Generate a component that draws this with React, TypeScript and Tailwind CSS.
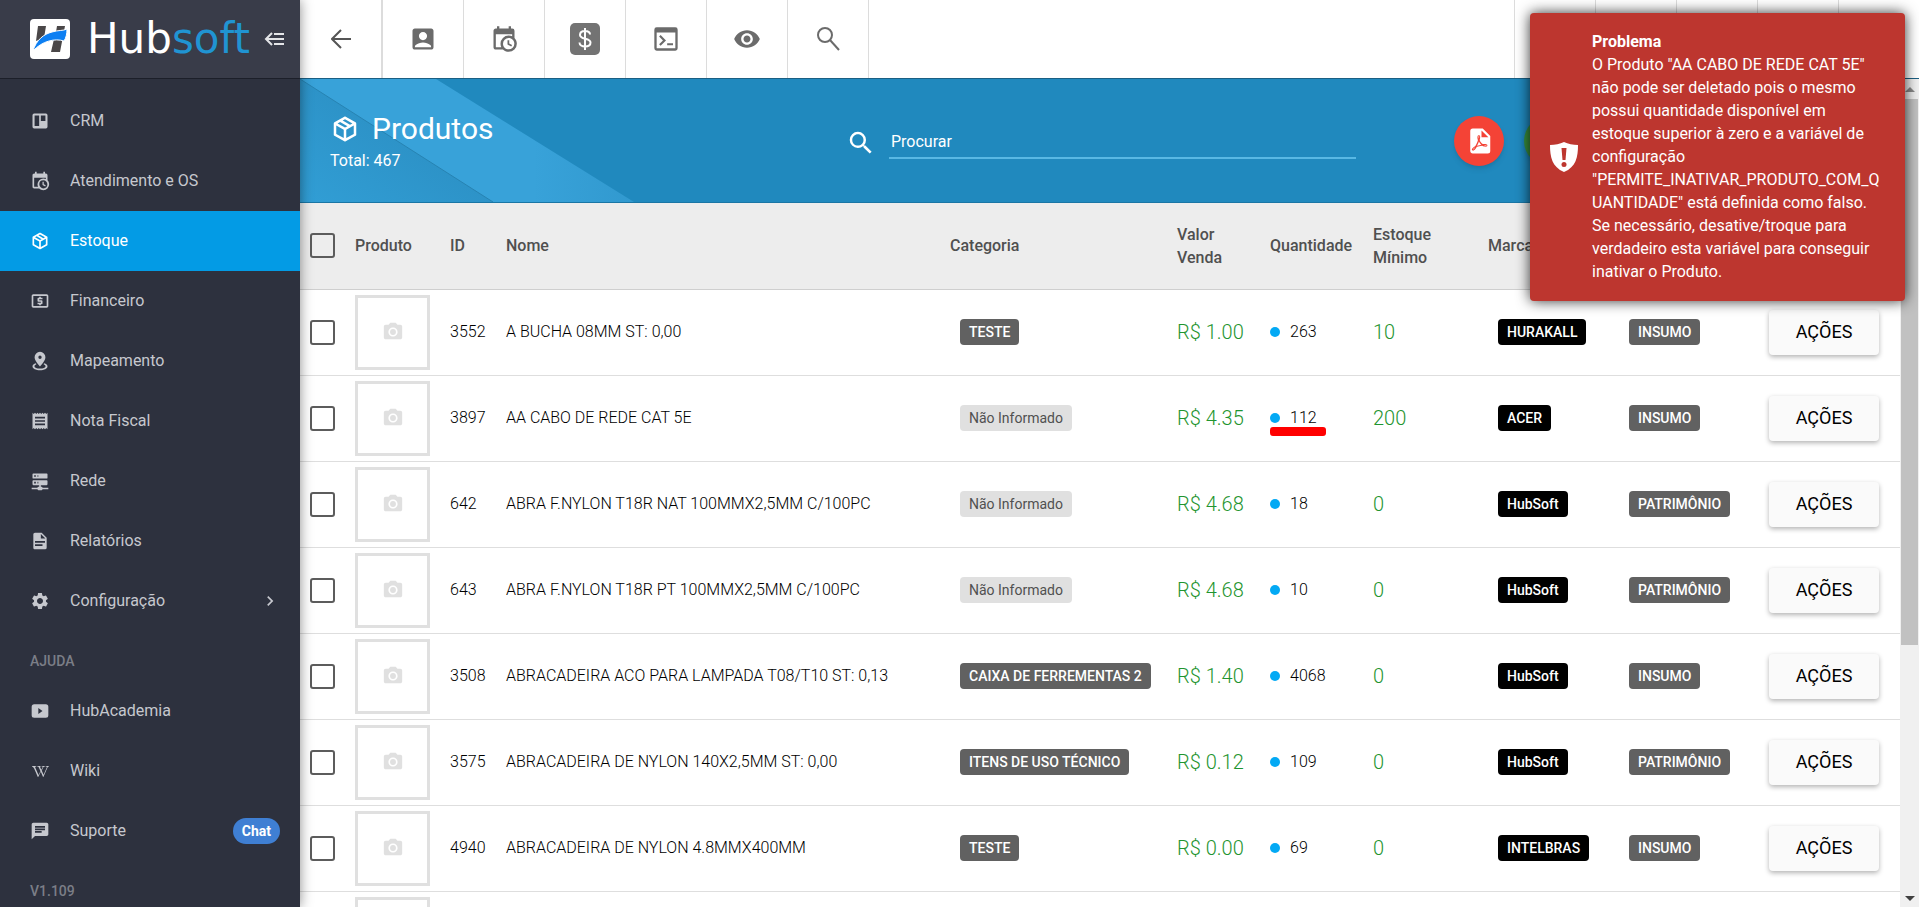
import React from 'react';
import { FaWikipediaW } from 'react-icons/fa';
import {
  MdAccountBox,
  MdCameraAlt,
  MdChat,
  MdChevronRight,
  MdLocalAtm,
  MdReceipt,
  MdRemoveRedEye,
  MdSearch,
  MdSettings,
} from 'react-icons/md';

const paths = {
  trello:
    'M5,3H19A2,2 0 0,1 21,5V19A2,2 0 0,1 19,21H5A2,2 0 0,1 3,19V5A2,2 0 0,1 5,3M5.5,5.5V18H11V5.5H5.5M13,5.5V12H18.5V5.5H13Z',
  calendarClock:
    'M15,13H16.5V15.82L18.94,17.23L18.19,18.53L15,16.69V13M19,8H5V19H9.67C9.24,18.09 9,17.07 9,16A7,7 0 0,1 16,9C17.07,9 18.09,9.24 19,9.67V8M5,21C3.89,21 3,20.1 3,19V5C3,3.89 3.89,3 5,3H6V1H8V3H16V1H18V3H19A2,2 0 0,1 21,5V11.1C22.24,12.36 23,14.09 23,16A7,7 0 0,1 16,23C14.09,23 12.36,22.24 11.1,21H5M16,11.15A4.85,4.85 0 0,0 11.15,16C11.15,18.68 13.32,20.85 16,20.85A4.85,4.85 0 0,0 20.85,16C20.85,13.32 18.68,11.15 16,11.15Z',
  box:
    'M21,16.5C21,16.88 20.79,17.21 20.47,17.38L12.57,21.82C12.41,21.94 12.21,22 12,22C11.79,22 11.59,21.94 11.43,21.82L3.53,17.38C3.21,17.21 3,16.88 3,16.5V7.5C3,7.12 3.21,6.79 3.53,6.62L11.43,2.18C11.59,2.06 11.79,2 12,2C12.21,2 12.41,2.06 12.57,2.18L20.47,6.62C20.79,6.79 21,7.12 21,7.5V16.5M12,4.15L10.11,5.22L16,8.61L17.96,7.5L12,4.15M6.04,7.5L12,10.85L13.96,9.75L8.08,6.35L6.04,7.5M5,15.91L11,19.29V12.58L5,9.21V15.91M19,15.91V9.21L13,12.58V19.29L19,15.91Z',
  marker:
    'M12,1A6.5,6.5 0 0,1 18.5,7.5C18.5,12 12,18.5 12,18.5C12,18.5 5.5,12 5.5,7.5A6.5,6.5 0 0,1 12,1M12,5.5A2,2 0 0,0 12,9.5A2,2 0 0,0 12,5.5M21,18.5C21,21 17,23 12,23C7,23 3,21 3,18.5C3,16.9 4.6,15.5 7,14.8L7.7,15.9C6.2,16.5 5.3,17.4 5.3,18.2C5.3,19.7 8.3,21 12,21C15.7,21 18.7,19.7 18.7,18.2C18.7,17.4 17.8,16.5 16.3,15.9L17,14.8C19.4,15.5 21,16.9 21,18.5Z',
  server:
    'M13,19H14A1,1 0 0,1 15,20H22V22H15A1,1 0 0,1 14,23H10A1,1 0 0,1 9,22H2V20H9A1,1 0 0,1 10,19H11V17H4A1,1 0 0,1 3,16V12A1,1 0 0,1 4,11H20A1,1 0 0,1 21,12V16A1,1 0 0,1 20,17H13V19M4,3H20A1,1 0 0,1 21,4V8A1,1 0 0,1 20,9H4A1,1 0 0,1 3,8V4A1,1 0 0,1 4,3M9,7H10V5H9V7M9,15H10V13H9V15M5,5V7H7V5H5M5,13V15H7V13H5Z',
  file:
    'M13,9H18.5L13,3.5V9M6,2H14L20,8V20A2,2 0 0,1 18,22H6C4.89,22 4,21.1 4,20V4C4,2.89 4.89,2 6,2M15,18V16H6V18H15M18,14V12H6V14H18Z',
  play:
    'M5,4H19A3,3 0 0,1 22,7V17A3,3 0 0,1 19,20H5A3,3 0 0,1 2,17V7A3,3 0 0,1 5,4M10,8.5V15.5L15,12L10,8.5Z',
  console:
    'M4,2H20A2,2 0 0,1 22,4V20A2,2 0 0,1 20,22H4A2,2 0 0,1 2,20V4A2,2 0 0,1 4,2M4,6.5V20H20V6.5H4M7.4,8.6L12,13.2L7.4,17.8L6.1,16.5L9.4,13.2L6.1,9.9L7.4,8.6M13,15.6H18V17.4H13V15.6Z',
  pdf:
    'M14,9H19.5L14,3.5V9M7,2H15L21,8V20A2,2 0 0,1 19,22H7C5.89,22 5,21.1 5,20V4A2,2 0 0,1 7,2M11.93,12.44C12.34,13.34 12.86,14.08 13.46,14.59L13.87,14.91C13,15.07 11.8,15.35 10.53,15.84V15.84L10.42,15.88L10.92,14.84C11.37,13.97 11.7,13.18 11.93,12.44M18.41,16.25C18.59,16.07 18.68,15.84 18.69,15.59C18.72,15.39 18.67,15.2 18.57,15.04C18.28,14.57 17.53,14.35 16.29,14.35L15,14.42L14.13,13.84C13.5,13.32 12.93,12.41 12.53,11.28L12.57,11.14C12.9,9.81 13.21,8.2 12.55,7.54C12.39,7.38 12.17,7.3 11.94,7.3H11.7C11.33,7.3 11,7.69 10.91,8.07C10.54,9.4 10.76,10.13 11.13,11.34V11.35C10.88,12.23 10.56,13.25 10.05,14.28L9.09,16.08L8.2,16.57C7,17.32 6.43,18.16 6.32,18.69C6.28,18.88 6.3,19.05 6.37,19.23L6.4,19.28L6.88,19.59L7.32,19.7C8.13,19.7 9.05,18.75 10.29,16.63L10.47,16.56C11.5,16.23 12.78,16 14.5,15.81C15.53,16.32 16.74,16.55 17.5,16.55C17.94,16.55 18.24,16.44 18.41,16.25M18,15.54L18.09,15.65C18.08,15.75 18.05,15.76 18,15.78H17.96L17.77,15.8C17.31,15.8 16.6,15.61 15.87,15.29C15.96,15.19 16,15.19 16.1,15.19C17.5,15.19 17.9,15.44 18,15.54M8.83,17C8.18,18.19 7.59,18.85 7.14,19C7.19,18.62 7.64,17.96 8.35,17.31L8.83,17M11.85,10.09C11.62,9.19 11.61,8.46 11.78,8.04L11.85,7.92L12,7.97C12.17,8.21 12.19,8.53 12.09,9.07L12.06,9.23L11.9,10.05L11.85,10.09Z',
};

function Icon({ name, size = 20 }: { name: keyof typeof paths; size?: number }) {
  return (
    <svg width={size} height={size} viewBox="0 0 24 24" fill="currentColor" fillRule="evenodd" aria-hidden="true">
      <path d={paths[name]} />
    </svg>
  );
}

const menu = [
  { label: 'CRM', icon: <Icon name="trello" /> },
  { label: 'Atendimento e OS', icon: <Icon name="calendarClock" /> },
  { label: 'Estoque', icon: <Icon name="box" />, active: true },
  { label: 'Financeiro', icon: <MdLocalAtm size={20} /> },
  { label: 'Mapeamento', icon: <Icon name="marker" /> },
  { label: 'Nota Fiscal', icon: <MdReceipt size={20} /> },
  { label: 'Rede', icon: <Icon name="server" /> },
  { label: 'Relatórios', icon: <Icon name="file" /> },
  { label: 'Configuração', icon: <MdSettings size={20} />, extra: <MdChevronRight size={20} /> },
];

const help = [
  { label: 'HubAcademia', icon: <Icon name="play" /> },
  { label: 'Wiki', icon: <FaWikipediaW size={17} /> },
  {
    label: 'Suporte',
    icon: <MdChat size={20} />,
    extra: (
      <span className="flex h-[26px] items-center rounded-full bg-[#3f7fd3] px-[9px] text-sm font-bold text-white">
        Chat
      </span>
    ),
  },
];

interface Product {
  id: string;
  name: string;
  category?: string;
  price: string;
  quantity: string;
  minimum: string;
  brand: string;
  type: string;
  marked?: boolean;
}

const products: Product[] = [
  { id: '3552', name: 'A BUCHA 08MM ST: 0,00', category: 'TESTE', price: 'R$ 1.00', quantity: '263', minimum: '10', brand: 'HURAKALL', type: 'INSUMO' },
  { id: '3897', name: 'AA CABO DE REDE CAT 5E', price: 'R$ 4.35', quantity: '112', minimum: '200', brand: 'ACER', type: 'INSUMO', marked: true },
  { id: '642', name: 'ABRA F.NYLON T18R NAT 100MMX2,5MM C/100PC', price: 'R$ 4.68', quantity: '18', minimum: '0', brand: 'HubSoft', type: 'PATRIMÔNIO' },
  { id: '643', name: 'ABRA F.NYLON T18R PT 100MMX2,5MM C/100PC', price: 'R$ 4.68', quantity: '10', minimum: '0', brand: 'HubSoft', type: 'PATRIMÔNIO' },
  { id: '3508', name: 'ABRACADEIRA ACO PARA LAMPADA T08/T10 ST: 0,13', category: 'CAIXA DE FERREMENTAS 2', price: 'R$ 1.40', quantity: '4068', minimum: '0', brand: 'HubSoft', type: 'INSUMO' },
  { id: '3575', name: 'ABRACADEIRA DE NYLON 140X2,5MM ST: 0,00', category: 'ITENS DE USO TÉCNICO', price: 'R$ 0.12', quantity: '109', minimum: '0', brand: 'HubSoft', type: 'PATRIMÔNIO' },
  { id: '4940', name: 'ABRACADEIRA DE NYLON 4.8MMX400MM', category: 'TESTE', price: 'R$ 0.00', quantity: '69', minimum: '0', brand: 'INTELBRAS', type: 'INSUMO' },
];

function Logo() {
  return (
    <a href="#" aria-label="Hubsoft" className="flex items-center gap-[17px]">
      <svg width="40" height="40" viewBox="0 0 40 40" aria-hidden="true">
        <rect width="40" height="40" rx="4" fill="#fff" />
        <path d="M8 7H16L14 19L6 22ZM27 7H35L30 33H21L24 20L26 13Z" fill="#4a4748" />
        <path d="M3 32C6 21 14 15 22 13C28 11 33 12 37 10C37 15 36 19 34 22C25 19 12 22 3 32Z" fill="#0d7ff2" stroke="#fff" strokeWidth="1" />
      </svg>
      <span className="font-['DejaVu_Sans',sans-serif] text-[42px] leading-10 text-white">
        Hub<span className="text-[#2094d2]">soft</span>
      </span>
    </a>
  );
}

function NavItem({ item }: { item: { label: string; icon: React.ReactNode; active?: boolean; extra?: React.ReactNode } }) {
  return (
    <a
      href="#"
      className={`flex h-[60px] items-center pr-5 pl-[30px] text-base ${
        item.active ? 'bg-[#039be5] text-white' : 'text-[#c6c8ce]'
      }`}
    >
      <span className="mr-5 flex w-5 justify-center">{item.icon}</span>
      <span className="flex-1">{item.label}</span>
      {item.extra}
    </a>
  );
}

function Sidebar() {
  return (
    <aside className="z-10 flex w-[300px] shrink-0 flex-col bg-[#2d313e] shadow-[0_0_12px_rgba(0,0,0,0.45)]">
      <div className="flex h-[79px] shrink-0 items-center border-b border-[#1c1f29] bg-[#393c49] pr-4 pl-[30px]">
        <div className="min-w-0 flex-1">
          <Logo />
        </div>
        <button aria-label="Recolher menu" className="text-[#e4e5e8]">
          <svg width="20" height="16" viewBox="0 0 20 16" fill="none" stroke="currentColor" strokeWidth="2" aria-hidden="true">
            <path d="M8 2L2 8L8 14M2 8H20M10 3H20M10 13H20" />
          </svg>
        </button>
      </div>
      <nav className="pt-3">
        {menu.map((item) => (
          <NavItem key={item.label} item={item} />
        ))}
        <h2 className="h-[50px] pt-5 pl-[30px] text-sm font-medium text-[#7b7e87]">AJUDA</h2>
        {help.map((item) => (
          <NavItem key={item.label} item={item} />
        ))}
        <p className="h-[46px] pt-5 pl-[30px] text-sm font-medium text-[#7b7e87]">V1.109</p>
      </nav>
    </aside>
  );
}

function Toolbar() {
  const actions = [
    { label: 'Clientes', icon: <MdAccountBox size={28} /> },
    { label: 'Agenda', icon: <Icon name="calendarClock" size={28} /> },
    {
      label: 'Financeiro',
      icon: (
        <svg width="30" height="34" viewBox="0 0 30 34" aria-hidden="true">
          <rect y="1" width="30" height="32" rx="5" fill="#737373" />
          <path d="M20 12.5C20 10 17.5 9 15 9C12 9 10 10.5 10 13C10 18 20.5 15.5 20.5 20.5C20.5 23.5 18 24.5 15 24.5C12 24.5 9.5 23 9.5 20.5M15 6V28" fill="none" stroke="#fff" strokeWidth="2" />
        </svg>
      ),
    },
    { label: 'Console', icon: <Icon name="console" size={28} /> },
    { label: 'Visualizar', icon: <MdRemoveRedEye size={28} /> },
    {
      label: 'Pesquisar',
      icon: (
        <svg width="24" height="26" viewBox="0 0 24 26" fill="none" stroke="currentColor" strokeWidth="2" aria-hidden="true">
          <circle cx="9" cy="9" r="7" />
          <path d="M14 14L23 24" />
        </svg>
      ),
    },
  ];

  return (
    <header className="flex h-[79px] shrink-0 border-b border-[#1b5f83] bg-white text-[#6b6b6b]">
      <button aria-label="Voltar" className="flex w-[83px] items-center justify-center border-r-2 border-[#dcdcdc] text-[#555]">
        <svg width="20" height="20" viewBox="0 0 20 20" fill="none" stroke="currentColor" strokeWidth="2" aria-hidden="true">
          <path d="M10 1L1 10L10 19M1 10H20" />
        </svg>
      </button>
      {actions.map((action) => (
        <button
          key={action.label}
          aria-label={action.label}
          className="flex w-[81px] items-center justify-center border-r border-[#dcdcdc]"
        >
          {action.icon}
        </button>
      ))}
      <div className="flex-1" />
      {[1, 2, 3, 4, 5].map((slot) => (
        <div key={slot} className="w-[81px] border-l border-[#dcdcdc]" />
      ))}
    </header>
  );
}

function Banner() {
  return (
    <section className="relative flex h-[124px] shrink-0 items-center border-b border-[#1a76a5] bg-[#2089be] text-white">
      <svg className="absolute inset-y-0 left-0" width="340" height="123" viewBox="0 0 340 123" aria-hidden="true">
        <defs>
          <linearGradient id="fold" x1="0" y1="1" x2="1" y2="0">
            <stop offset="0" stopColor="#319ed5" />
            <stop offset="0.5" stopColor="#2d93c8" />
          </linearGradient>
          <linearGradient id="band" x1="0" y1="0" x2="1" y2="0">
            <stop offset="0.7" stopColor="#38a2d9" />
            <stop offset="1" stopColor="#3199cf" />
          </linearGradient>
        </defs>
        <path d="M0 0H136L334 123H0Z" fill="url(#band)" />
        <path d="M0 0L193 123H0Z" fill="url(#fold)" />
        <path d="M0 0L193 123" stroke="#2783b2" />
      </svg>
      <div className="relative w-[546px] pl-[30px]">
        <div className="flex items-center gap-3">
          <Icon name="box" size={30} />
          <h1 className="text-[30px] leading-10">Produtos</h1>
        </div>
        <p className="text-base">Total: 467</p>
      </div>
      <label className="flex max-w-[510px] flex-1 items-center gap-[13px] pt-1">
        <MdSearch size={30} />
        <input
          type="search"
          aria-label="Procurar"
          placeholder="Procurar"
          className="h-8 min-w-0 flex-1 border-b-2 border-[#58b8e4] px-[2px] text-base outline-none placeholder:text-white"
        />
      </label>
      <div className="ml-auto flex gap-5 pr-[326px]">
        <button aria-label="Exportar PDF" className="flex size-[50px] items-center justify-center rounded-full bg-[#f44336] shadow-md">
          <Icon name="pdf" size={30} />
        </button>
        <button aria-label="Adicionar produto" className="size-[50px] rounded-full bg-[#388e3c] shadow-md" />
      </div>
    </section>
  );
}

function Checkbox({ label }: { label: string }) {
  return (
    <input
      type="checkbox"
      aria-label={label}
      className="ml-[10px] block size-[25px] appearance-none rounded-[3px] border-2 border-[#5c5c5c]"
    />
  );
}

function Badge({ children, className }: { children: React.ReactNode; className: string }) {
  return (
    <span className={`ml-[10px] inline-flex h-[26px] items-center rounded px-[9px] align-middle text-sm whitespace-nowrap ${className}`}>
      {children}
    </span>
  );
}

function Thumb() {
  return (
    <div className="flex size-[75px] items-center justify-center border-[3px] border-[#e0e0e0] text-[#e0e0e0]">
      <MdCameraAlt size={22} />
    </div>
  );
}

function ProductTable() {
  return (
    <table className="w-full table-fixed border-collapse text-left text-base">
      <colgroup>
        <col className="w-[55px]" />
        <col className="w-[95px]" />
        <col className="w-[56px]" />
        <col />
        <col className="w-[227px]" />
        <col className="w-[93px]" />
        <col className="w-[103px]" />
        <col className="w-[115px]" />
        <col className="w-[131px]" />
        <col className="w-[150px]" />
        <col className="w-[131px]" />
      </colgroup>
      <thead>
        <tr className="h-[86px] border-b border-[#cfcfcf] bg-[#ededed] text-[#505050] *:font-medium">
          <th><Checkbox label="Selecionar todos" /></th>
          <th>Produto</th>
          <th>ID</th>
          <th>Nome</th>
          <th>Categoria</th>
          <th className="pr-8 leading-[23px]">Valor Venda</th>
          <th>Quantidade</th>
          <th className="pr-10 leading-[23px]">Estoque Mínimo</th>
          <th>Marca</th>
          <th />
          <th />
        </tr>
      </thead>
      <tbody>
        {products.map((product) => (
          <tr key={product.id} className="h-[86px] border-b border-[#dedede] font-light text-black">
            <td><Checkbox label={`Selecionar ${product.name}`} /></td>
            <td><Thumb /></td>
            <td>{product.id}</td>
            <td>{product.name}</td>
            <td>
              {product.category ? (
                <Badge className="bg-[#616161] font-medium text-white">{product.category}</Badge>
              ) : (
                <Badge className="bg-[#e0e0e0] font-normal text-[#505050]">Não Informado</Badge>
              )}
            </td>
            <td className="text-xl text-[#1f9530]">{product.price}</td>
            <td>
              <span className="relative inline-flex items-center gap-[10px]">
                <span className="size-[10px] rounded-full bg-[#03a9f4]" />
                {product.quantity}
                {product.marked && <span className="absolute top-[21px] left-0 h-[9px] w-14 rounded-[3px] bg-[#ff0000]" />}
              </span>
            </td>
            <td className="text-xl text-[#1f9530]">{product.minimum}</td>
            <td><Badge className="bg-black font-medium text-white">{product.brand}</Badge></td>
            <td><Badge className="bg-[#616161] font-medium text-white">{product.type}</Badge></td>
            <td>
              <button className="h-[45px] w-[110px] rounded bg-[#fafafa] text-lg font-normal shadow-[0_2px_5px_rgba(0,0,0,0.3)]">
                AÇÕES
              </button>
            </td>
          </tr>
        ))}
        <tr className="h-[86px]">
          <td />
          <td><Thumb /></td>
          <td colSpan={9} />
        </tr>
      </tbody>
    </table>
  );
}

function Scrollbar() {
  return (
    <div className="flex w-[19px] shrink-0 flex-col items-center bg-[#f0f0f0]" aria-hidden="true">
      <svg width="10" height="20" viewBox="0 0 10 20" className="shrink-0">
        <path d="M0 13L5 8L10 13Z" fill="#8a8a8a" />
      </svg>
      <div className="h-[66%] w-[17px] bg-[#c1c1c1]" />
      <div className="flex-1" />
      <svg width="10" height="20" viewBox="0 0 10 20" className="shrink-0">
        <path d="M0 9L5 14L10 9Z" fill="#404040" />
      </svg>
    </div>
  );
}

function Toast() {
  return (
    <div
      role="alert"
      className="absolute top-[13px] right-[14px] z-20 flex w-[375px] items-center gap-[13px] rounded bg-[#bd362f] pt-[17px] pr-5 pb-[18px] pl-[19px] text-white shadow-[0_0_14px_rgba(0,0,0,0.8)]"
    >
      <svg width="30" height="30" viewBox="0 0 30 30" className="shrink-0" aria-hidden="true">
        <path d="M15 0C19 2 24 3 29 3C29 15 27 25 15 30C3 25 1 15 1 3C6 3 11 2 15 0Z" fill="#fff" />
        <path d="M12.5 6H17.5L16.5 18H13.5Z" fill="#bd362f" />
        <circle cx="15" cy="22.5" r="2.5" fill="#bd362f" />
      </svg>
      <div className="min-w-0 flex-1 text-base leading-[23px] break-words">
        <p className="font-bold">Problema</p>
        <p>
          O Produto "AA CABO DE REDE CAT 5E" não pode ser deletado pois o mesmo possui quantidade disponível em
          estoque superior à zero e a variável de configuração "PERMITE_INATIVAR_PRODUTO_COM_QUANTIDADE" está
          definida como falso. Se necessário, desative/troque para verdadeiro esta variável para conseguir inativar
          o Produto.
        </p>
      </div>
    </div>
  );
}

export default function App() {
  return (
    <div className="relative flex h-screen overflow-hidden bg-white font-['Roboto',sans-serif]">
      <Sidebar />
      <main className="flex min-w-0 flex-1 flex-col">
        <Toolbar />
        <div className="flex min-h-0 flex-1">
          <div className="flex min-w-0 flex-1 flex-col overflow-hidden">
            <Banner />
            <ProductTable />
          </div>
          <Scrollbar />
        </div>
      </main>
      <Toast />
    </div>
  );
}
